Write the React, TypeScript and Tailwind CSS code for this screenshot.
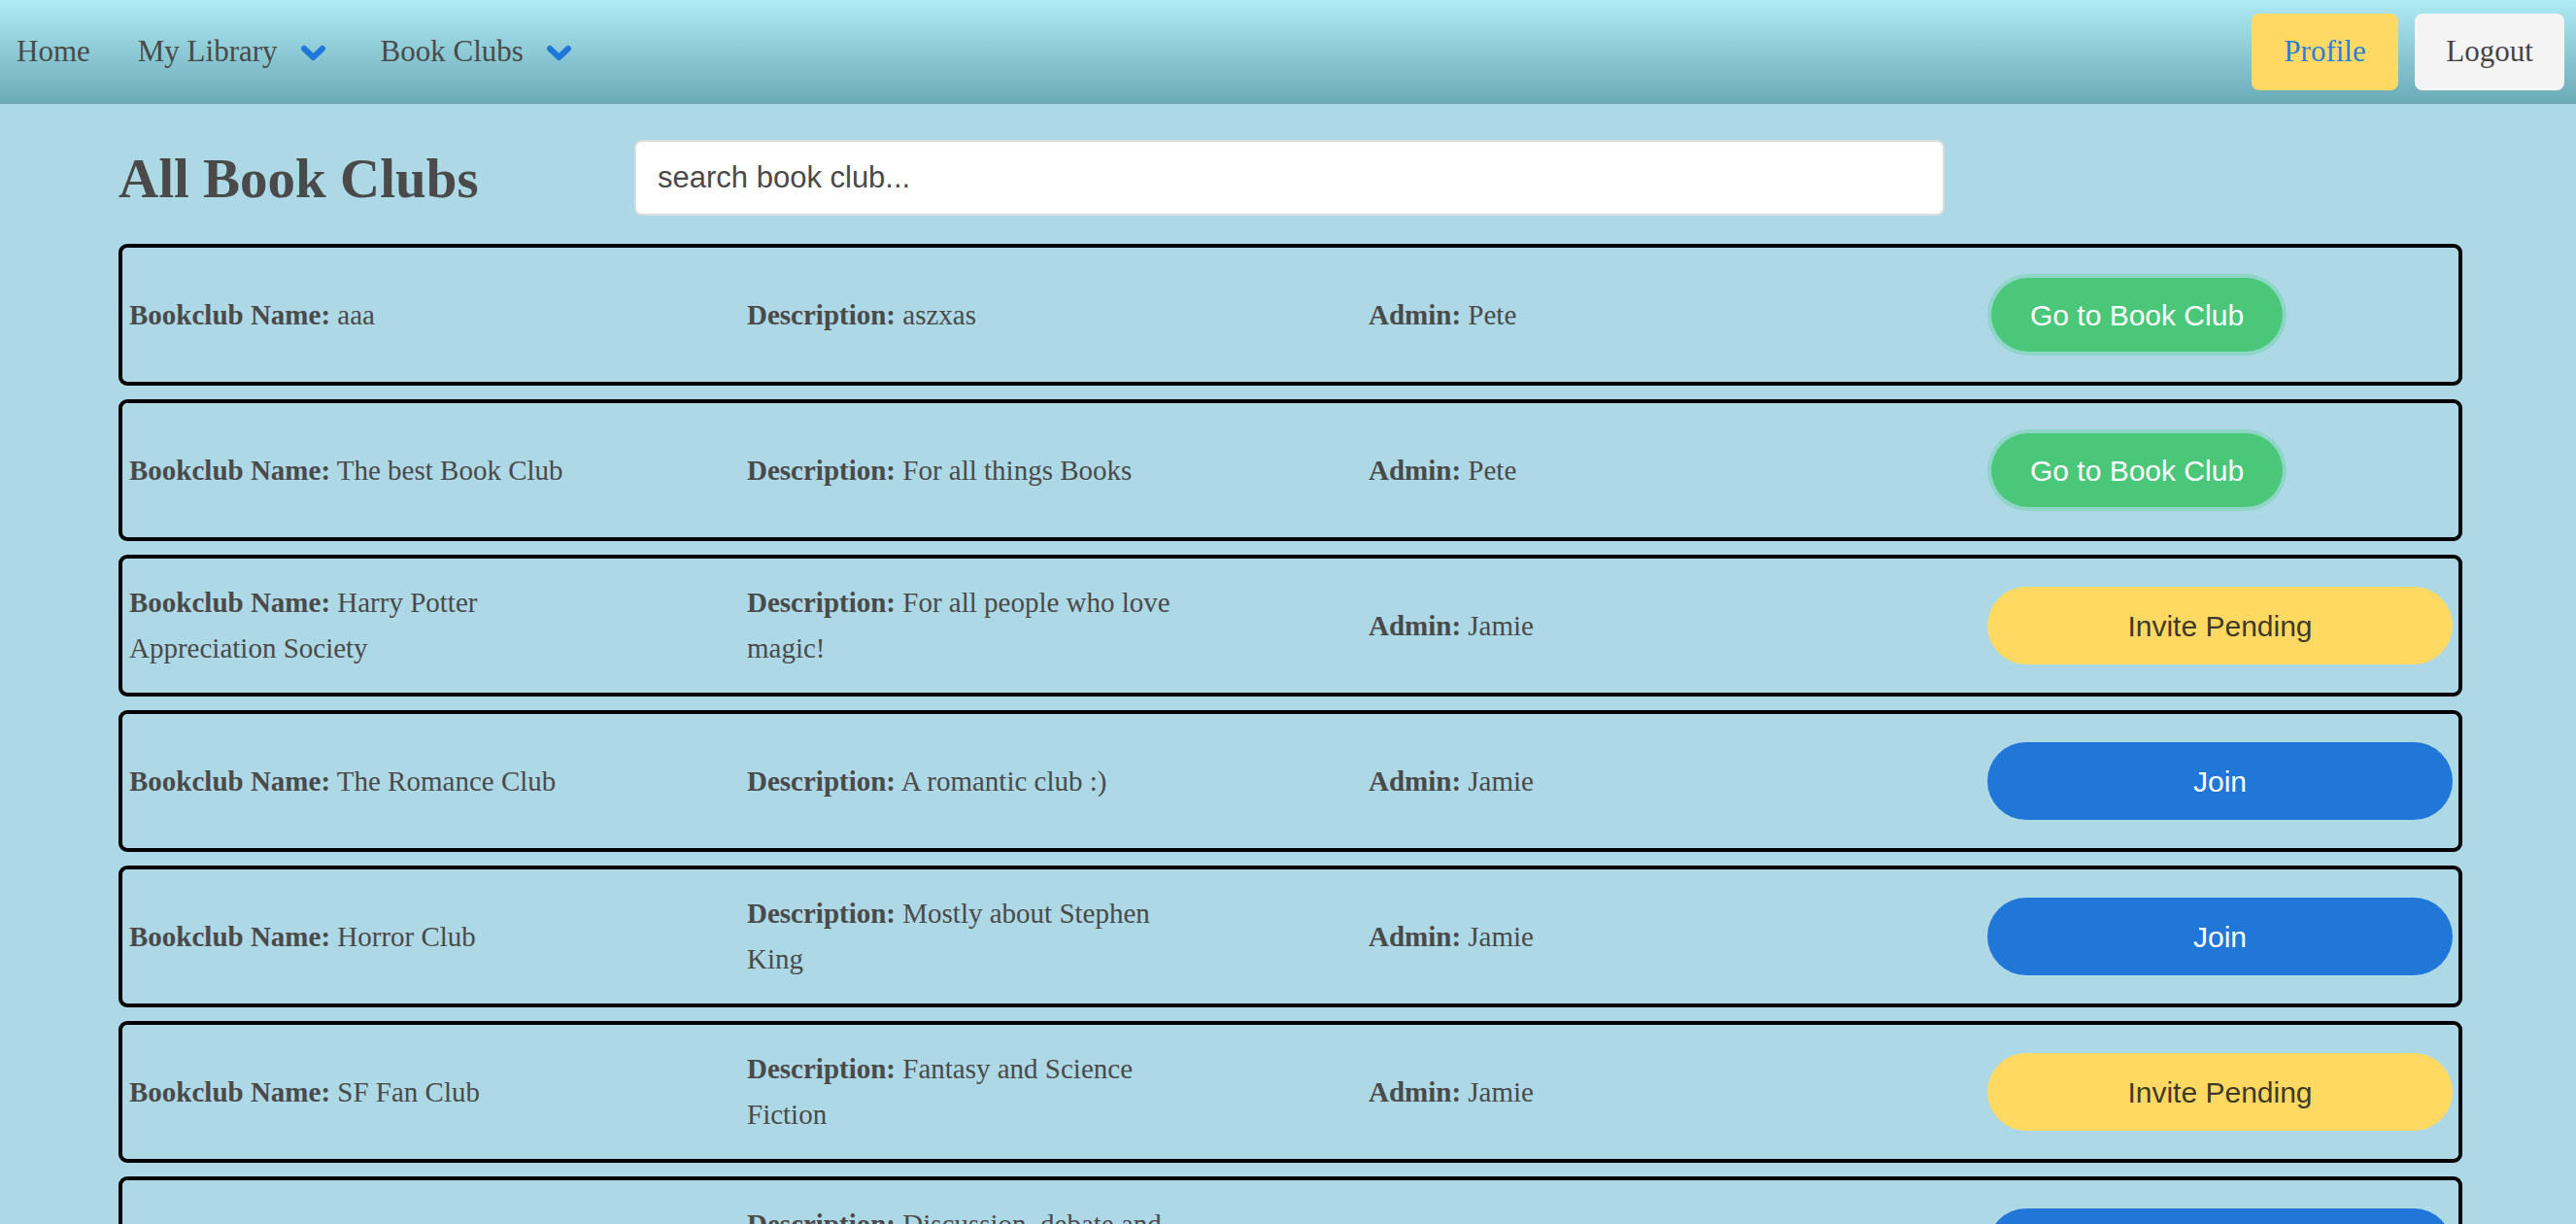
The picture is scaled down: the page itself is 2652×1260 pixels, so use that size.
import React from "react";

type Status = "member" | "pending" | "join";

type Club = {
  readonly id: number;
  readonly name: string;
  readonly description: string;
  readonly admin: string;
  readonly status: Status;
};

const CLUBS: ReadonlyArray<Club> = [
  { id: 1, name: "aaa", description: "aszxas", admin: "Pete", status: "member" },
  { id: 2, name: "The best Book Club", description: "For all things Books", admin: "Pete", status: "member" },
  { id: 3, name: "Harry Potter Appreciation Society", description: "For all people who love magic!", admin: "Jamie", status: "pending" },
  { id: 4, name: "The Romance Club", description: "A romantic club :)", admin: "Jamie", status: "join" },
  { id: 5, name: "Horror Club", description: "Mostly about Stephen King", admin: "Jamie", status: "join" },
  { id: 6, name: "SF Fan Club", description: "Fantasy and Science Fiction", admin: "Jamie", status: "pending" },
  { id: 7, name: "Philosophy Club", description: "Discussion, debate and analysis", admin: "Jamie", status: "join" },
];

const SERIF = "[font-family:'Liberation_Serif','DejaVu_Serif',serif]";
const SANS = "[font-family:'Liberation_Sans',Arial,sans-serif]";

function Chevron() {
  return (
    <svg width="27" height="17" viewBox="0 0 27 17" className="ml-[23px] mt-[1px]">
      <polyline
        points="4,4 13.5,13 23,4"
        fill="none"
        stroke="#1f78d9"
        strokeWidth="6"
        strokeLinecap="round"
        strokeLinejoin="round"
      />
    </svg>
  );
}

function ClubButton({ status }: { status: Status }) {
  if (status === "member") {
    return (
      <button
        type="button"
        className={`${SANS} ml-[4px] h-[76px] w-[300px] rounded-full bg-[#4bc77a] text-[30px] text-white ring-4 ring-[#8fd6c9]`}
      >
        Go to Book Club
      </button>
    );
  }
  if (status === "pending") {
    return (
      <button
        type="button"
        className={`${SANS} h-[80px] w-full rounded-full bg-[#ffd961] text-[30px] text-[#3f3a28]`}
      >
        Invite Pending
      </button>
    );
  }
  return (
    <button
      type="button"
      className={`${SANS} h-[80px] w-full rounded-full bg-[#2077d8] text-[30px] text-white`}
    >
      Join
    </button>
  );
}

export default function App() {
  return (
    <div className={`${SERIF} min-h-screen bg-[#add8e6] text-[#4a4a4a]`}>
      <nav className="flex h-[107px] items-center bg-linear-to-b from-[#afebf5] to-[#6aaab7]">
        <a className="ml-[17px] text-[31px]">Home</a>
        <a className="ml-[49px] text-[31px]">My Library</a>
        <Chevron />
        <a className="ml-[56px] text-[31px]">Book Clubs</a>
        <Chevron />
        <div className="ml-auto mr-[12px] flex gap-[17px]">
          <button
            type="button"
            className="h-[79px] w-[151px] rounded-[8px] bg-[#ffd963] text-[31px] text-[#2a7fd6]"
          >
            Profile
          </button>
          <button
            type="button"
            className="h-[79px] w-[154px] rounded-[8px] bg-[#f4f4f4] text-[31px] text-[#444]"
          >
            Logout
          </button>
        </div>
      </nav>

      <main className="pl-[122px] pr-[117px]">
        <div className="flex items-center pt-[37px]">
          <h1 className="w-[531px] text-[57px] font-bold leading-none">All Book Clubs</h1>
          <input
            type="text"
            placeholder="search book club..."
            className={`${SANS} h-[78px] w-[1349px] rounded-[8px] border-2 border-[#dcdcdc] bg-white px-[22px] text-[31px] text-[#333] placeholder:text-[#4a4a4a] outline-none`}
          />
        </div>

        <div className="mt-[29px] flex flex-col gap-[14px]">
          {CLUBS.map((club) => (
            <div
              key={club.id}
              className="grid h-[146px] grid-cols-[636px_640px_637px_1fr] items-center rounded-[9px] border-4 border-black pl-[7px] pr-[6px] text-[29px] leading-[47px]"
            >
              <div className="max-w-[460px]">
                <span className="font-bold">Bookclub Name:</span> {club.name}
              </div>
              <div className="max-w-[460px]">
                <span className="font-bold">Description:</span> {club.description}
              </div>
              <div className="max-w-[460px]">
                <span className="font-bold">Admin:</span> {club.admin}
              </div>
              <div className="flex items-center">
                <ClubButton status={club.status} />
              </div>
            </div>
          ))}
        </div>
      </main>
    </div>
  );
}
